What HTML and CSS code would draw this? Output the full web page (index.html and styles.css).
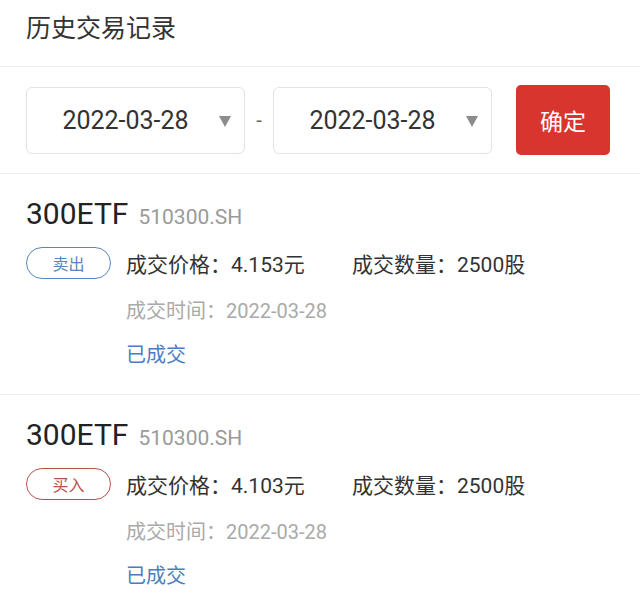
FILE: index.html
```html
<!DOCTYPE html>
<html lang="zh-CN">
<head>
    <meta charset="UTF-8">
    <meta name="viewport" content="width=device-width, initial-scale=1.0">
    <title>历史交易记录</title>
    <link rel="stylesheet" href="styles.css">
</head>
<body>
    <div class="header">
        <h1 class="title">历史交易记录</h1>
    </div>

    <div class="filter">
        <div class="date-select">
            <span class="date-text">2022-03-28</span>
            <i class="caret"></i>
        </div>
        <span class="dash">-</span>
        <div class="date-select">
            <span class="date-text">2022-03-28</span>
            <i class="caret"></i>
        </div>
        <button class="confirm" type="button">确定</button>
    </div>

    <ul class="records">
        <li class="record">
            <div class="name-row">
                <span class="name">300ETF</span>
                <span class="code">510300.SH</span>
            </div>
            <div class="detail-row">
                <span class="tag tag-sell">卖出</span>
                <span class="field field-price">成交价格：4.153元</span>
                <span class="field">成交数量：2500股</span>
            </div>
            <div class="time">成交时间：2022-03-28</div>
            <div class="status">已成交</div>
        </li>
        <li class="record">
            <div class="name-row">
                <span class="name">300ETF</span>
                <span class="code">510300.SH</span>
            </div>
            <div class="detail-row">
                <span class="tag tag-buy">买入</span>
                <span class="field field-price">成交价格：4.103元</span>
                <span class="field">成交数量：2500股</span>
            </div>
            <div class="time">成交时间：2022-03-28</div>
            <div class="status">已成交</div>
        </li>
    </ul>
</body>
</html>
```

FILE: styles.css
```css
body {
    margin: 0;
    background-color: #fff;
    font-family: Roboto, "Noto Sans CJK SC", sans-serif;
    color: #333;
}
.header {
    height: 66px;
    padding: 0 26px;
    display: flex;
    align-items: center;
    border-bottom: 1px solid #ececec;
}
.title {
    margin: 0 0 14px;
    font-size: 25px;
    font-weight: normal;
    color: #333;
}
.filter {
    height: 106px;
    padding: 0 26px;
    display: flex;
    align-items: center;
    border-bottom: 1px solid #ececec;
}
.date-select {
    width: 219px;
    height: 67px;
    box-sizing: border-box;
    padding: 0 13px 0 5px;
    display: flex;
    align-items: center;
    border: 1px solid #e3e3e3;
    border-radius: 6px;
}
.date-text {
    flex: 1;
    text-align: center;
    font-size: 25px;
    color: #333;
}
.caret {
    width: 0;
    height: 0;
    border-left: 6px solid transparent;
    border-right: 6px solid transparent;
    border-top: 11px solid #8c8c8c;
    margin-top: 3px;
}
.dash {
    width: 28px;
    text-align: center;
    font-size: 20px;
    color: #666;
}
.confirm {
    margin-left: 24px;
    width: 94px;
    height: 70px;
    border: none;
    border-radius: 5px;
    background-color: #d8352f;
    color: #fff;
    font-family: Roboto, "Noto Sans CJK SC", sans-serif;
    font-size: 23px;
    cursor: pointer;
}
.records {
    list-style: none;
    margin: 0;
    padding: 0;
}
.record {
    padding: 20px 26px 23px;
    display: flex;
    flex-direction: column;
    gap: 9px;
    border-bottom: 1px solid #ececec;
}
.name-row {
    height: 40px;
    display: flex;
    align-items: baseline;
    padding-top: 2px;
    box-sizing: border-box;
}
.name {
    font-size: 30px;
    color: #222;
}
.code {
    margin-left: 10px;
    font-size: 21px;
    color: #9a9a9a;
}
.detail-row {
    height: 40px;
    display: flex;
    align-items: center;
}
.tag {
    width: 85px;
    height: 32px;
    box-sizing: border-box;
    border: 1.5px solid;
    border-radius: 16px;
    display: flex;
    align-items: center;
    justify-content: center;
    font-size: 16px;
    margin-right: 15px;
}
.tag-sell {
    color: #5a86bd;
    border-color: #5a86bd;
}
.tag-buy {
    color: #b9524d;
    border-color: #b9524d;
}
.field {
    font-size: 21px;
    color: #333;
}
.field-price {
    width: 226px;
}
.time {
    height: 38px;
    line-height: 38px;
    padding-left: 100px;
    font-size: 20px;
    color: #aaa;
}
.status {
    height: 32px;
    line-height: 32px;
    padding-left: 100px;
    font-size: 20px;
    color: #4a7dc0;
}
```
